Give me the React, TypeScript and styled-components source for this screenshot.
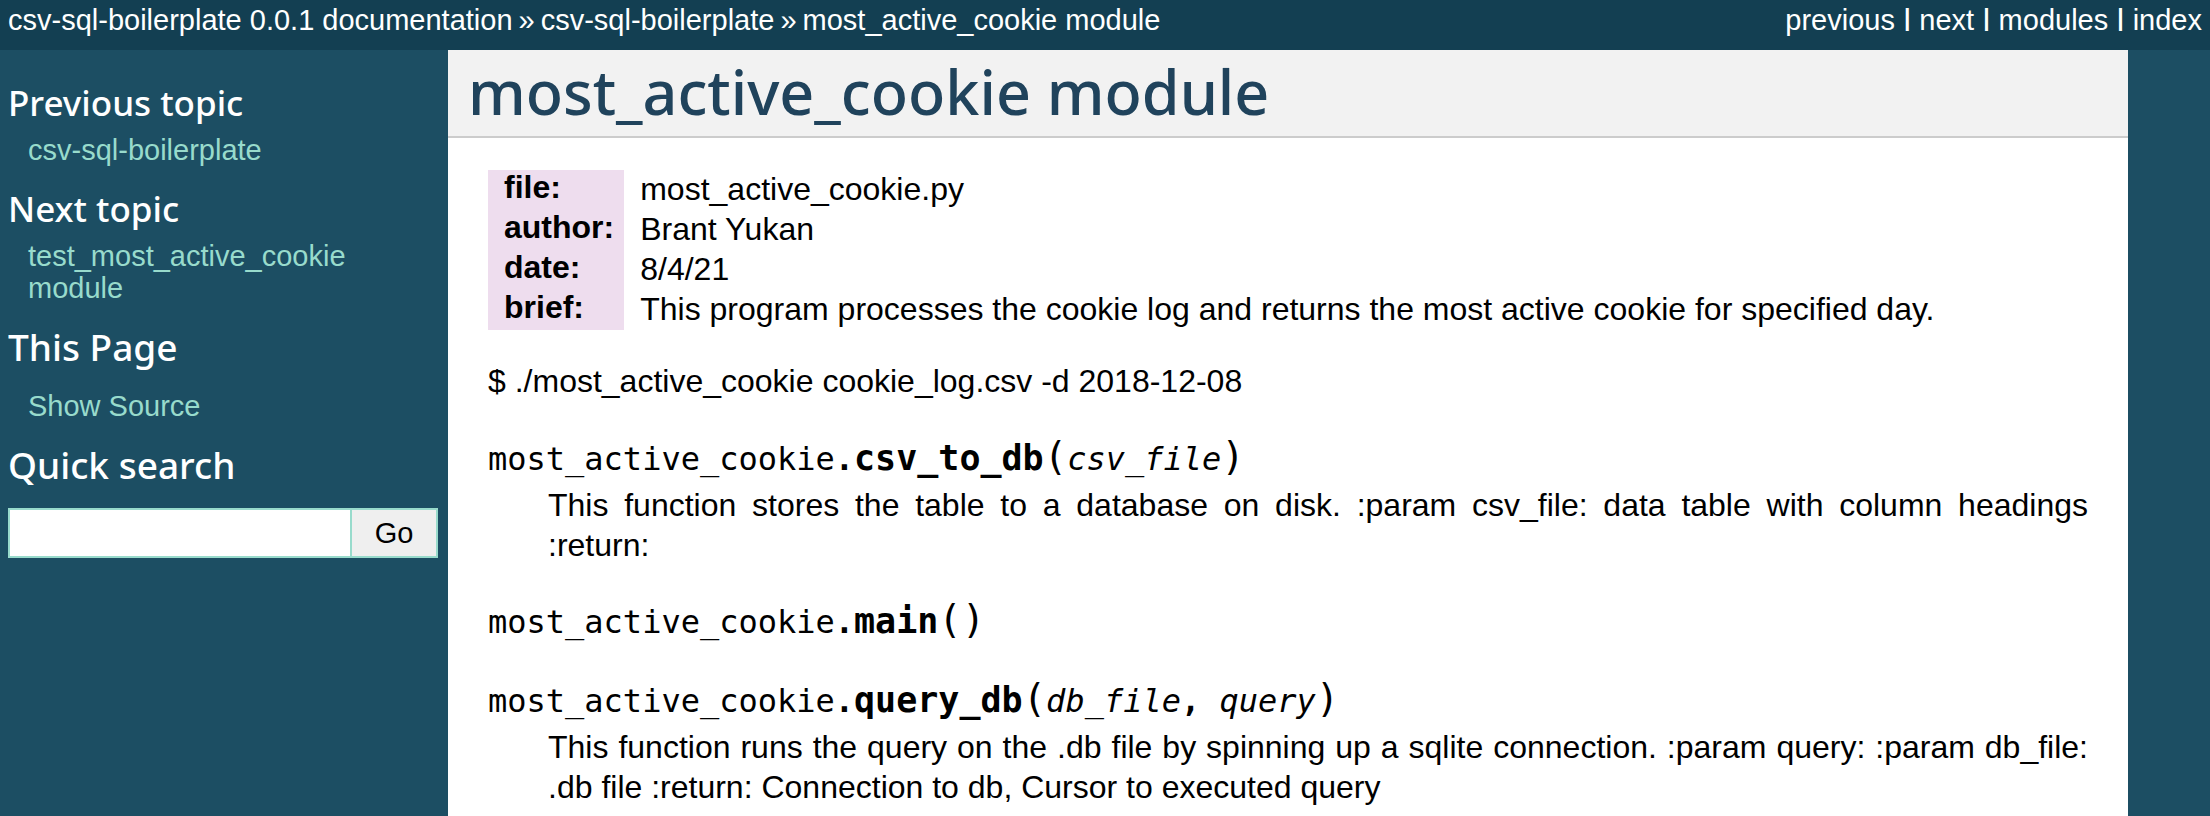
import React from 'react';
import styled, { createGlobalStyle } from 'styled-components';

const sans = '"Liberation Sans", Arial, Helvetica, sans-serif';
const heading = '"Noto Sans", "Trebuchet MS", sans-serif';
const mono = '"DejaVu Sans Mono", Menlo, Consolas, monospace';

const GlobalStyle = createGlobalStyle`
  *, *::before, *::after { box-sizing: border-box; }
  body {
    margin: 0;
    background: #1c4e63;
    color: #000;
    font-family: ${sans};
    font-size: 32px;
    line-height: 40px;
  }
  h1, h3, h4, p, ul, dl, dd { margin: 0; padding: 0; font-weight: 400; }
  ul { list-style: none; }
`;

const Page = styled.div`
  display: flex;
  flex-direction: column;
  min-height: 100vh;
`;

const TopBar = styled.nav`
  display: flex;
  justify-content: space-between;
  padding: 0 8px 10px;
  background: #133f52;
  color: #fff;
  font-size: 29px;
  line-height: 40px;
`;

const Crumbs = styled.ul`
  display: flex;
  gap: 6px;
`;

const Related = styled.ul`
  display: flex;
  gap: 9px;
`;

const BarLink = styled.a`
  color: #fff;
  text-decoration: none;
`;

const Pipe = styled.li`
  font-size: 23px;
  line-height: 36px;
  font-weight: 700;
`;

const Columns = styled.div`
  display: flex;
  flex: 1;
  padding-right: 82px;
`;

const Sidebar = styled.aside`
  flex: 0 0 448px;
  min-width: 0;
  padding: 30px 10px 0 8px;
  color: #fff;
`;

const TopicTitle = styled.h4`
  font-family: ${heading};
  font-size: 35px;
  font-weight: 500;
  line-height: 46px;
  margin-bottom: 8px;
`;

const SectionTitle = styled.h3`
  font-family: ${heading};
  font-size: 37px;
  font-weight: 500;
  line-height: 46px;
  margin-bottom: 20px;
`;

const SideText = styled.p`
  margin: 0 20px 20px;
  font-size: 29px;
  line-height: 32px;
`;

const SideLink = styled.a`
  color: #98dbcc;
  text-decoration: none;
`;

const SearchForm = styled.form`
  display: flex;
  height: 50px;
`;

const SearchInput = styled.input`
  flex: 1;
  min-width: 0;
  padding: 0 8px;
  border: 2px solid #98dbcc;
  border-right: 0;
  border-radius: 0;
  background: #fff;
  font: 29px ${sans};
  outline: none;
`;

const SearchButton = styled.button`
  width: 88px;
  padding: 0;
  border: 2px solid #98dbcc;
  border-radius: 0;
  background: #efefef;
  color: #000;
  font: 29px ${sans};
`;

const Document = styled.main`
  flex: 1;
  min-width: 0;
  background: #fff;
`;

const Title = styled.h1`
  padding: 0 20px 2px;
  border-bottom: 2px solid #ccc;
  background: #f2f2f2;
  color: #20435c;
  font-family: ${heading};
  font-size: 61px;
  font-weight: 500;
  line-height: 84px;
`;

const Body = styled.div`
  padding: 32px 40px 8px;
`;

const Fields = styled.dl`
  display: grid;
  grid-template-columns: max-content 1fr;
  margin-bottom: 31px;
`;

const FieldName = styled.dt`
  padding: 0 10px 6px 16px;
  background: #eeddee;
  font-weight: 700;
  line-height: 34px;
`;

const FieldValue = styled.dd`
  padding: 0 0 2px 16px;
  line-height: 38px;
`;

const Paragraph = styled.p`
  text-align: justify;
`;

const Entries = styled.dl`
  display: flex;
  flex-direction: column;
  gap: 35px;
  margin-top: 36px;
`;

const Signature = styled.dt`
  height: 44px;
  font-family: ${mono};
  font-size: 32px;
  line-height: 44px;
`;

const FunctionName = styled.b`
  font-size: 35px;
  line-height: 1;
`;

const Paren = styled.span`
  font-size: 39px;
  line-height: 1;
`;

const Description = styled.dd`
  margin: 4px 0 0 60px;
  text-align: justify;
`;

const crumbs = ['csv-sql-boilerplate 0.0.1 documentation', 'csv-sql-boilerplate', 'most_active_cookie module'];
const related = ['previous', 'next', 'modules', 'index'];

const fields = [
  ['file:', 'most_active_cookie.py'],
  ['author:', 'Brant Yukan'],
  ['date:', '8/4/21'],
  ['brief:', 'This program processes the cookie log and returns the most active cookie for specified day.'],
];

type Entry = { name: string; params: string[]; text?: string };

const entries: Entry[] = [
  {
    name: 'csv_to_db',
    params: ['csv_file'],
    text: 'This function stores the table to a database on disk. :param csv_file: data table with column headings :return:',
  },
  { name: 'main', params: [] },
  {
    name: 'query_db',
    params: ['db_file', 'query'],
    text: 'This function runs the query on the .db file by spinning up a sqlite connection. :param query: :param db_file: .db file :return: Connection to db, Cursor to executed query',
  },
];

function FunctionEntry({ name, params, text }: Entry) {
  return (
    <div>
      <Signature>
        most_active_cookie<b>.</b>
        <FunctionName>{name}</FunctionName>
        <Paren>(</Paren>
        {params.map((param, i) => (
          <React.Fragment key={param}>
            {i > 0 && <b>, </b>}
            <em>{param}</em>
          </React.Fragment>
        ))}
        <Paren>)</Paren>
      </Signature>
      {text && <Description>{text}</Description>}
    </div>
  );
}

export default function App() {
  return (
    <Page>
      <GlobalStyle />
      <TopBar aria-label="Related">
        <Crumbs>
          {crumbs.map((label, i) => (
            <React.Fragment key={label}>
              {i > 0 && <li>»</li>}
              <li><BarLink href="#">{label}</BarLink></li>
            </React.Fragment>
          ))}
        </Crumbs>
        <Related>
          {related.map((label, i) => (
            <React.Fragment key={label}>
              {i > 0 && <Pipe>|</Pipe>}
              <li><BarLink href="#">{label}</BarLink></li>
            </React.Fragment>
          ))}
        </Related>
      </TopBar>
      <Columns>
        <Sidebar>
          <TopicTitle>Previous topic</TopicTitle>
          <SideText><SideLink href="#">csv-sql-boilerplate</SideLink></SideText>
          <TopicTitle>Next topic</TopicTitle>
          <SideText><SideLink href="#">test_most_active_cookie module</SideLink></SideText>
          <SectionTitle>This Page</SectionTitle>
          <SideText><SideLink href="#">Show Source</SideLink></SideText>
          <SectionTitle id="searchlabel">Quick search</SectionTitle>
          <SearchForm role="search" onSubmit={(e) => e.preventDefault()}>
            <SearchInput type="text" name="q" aria-labelledby="searchlabel" />
            <SearchButton type="submit">Go</SearchButton>
          </SearchForm>
        </Sidebar>
        <Document>
          <Title>most_active_cookie module</Title>
          <Body>
            <Fields>
              {fields.map(([name, value]) => (
                <React.Fragment key={name}>
                  <FieldName>{name}</FieldName>
                  <FieldValue>{value}</FieldValue>
                </React.Fragment>
              ))}
            </Fields>
            <Paragraph>$ ./most_active_cookie cookie_log.csv -d 2018-12-08</Paragraph>
            <Entries>
              {entries.map((entry) => (
                <FunctionEntry key={entry.name} {...entry} />
              ))}
            </Entries>
          </Body>
        </Document>
      </Columns>
    </Page>
  );
}
